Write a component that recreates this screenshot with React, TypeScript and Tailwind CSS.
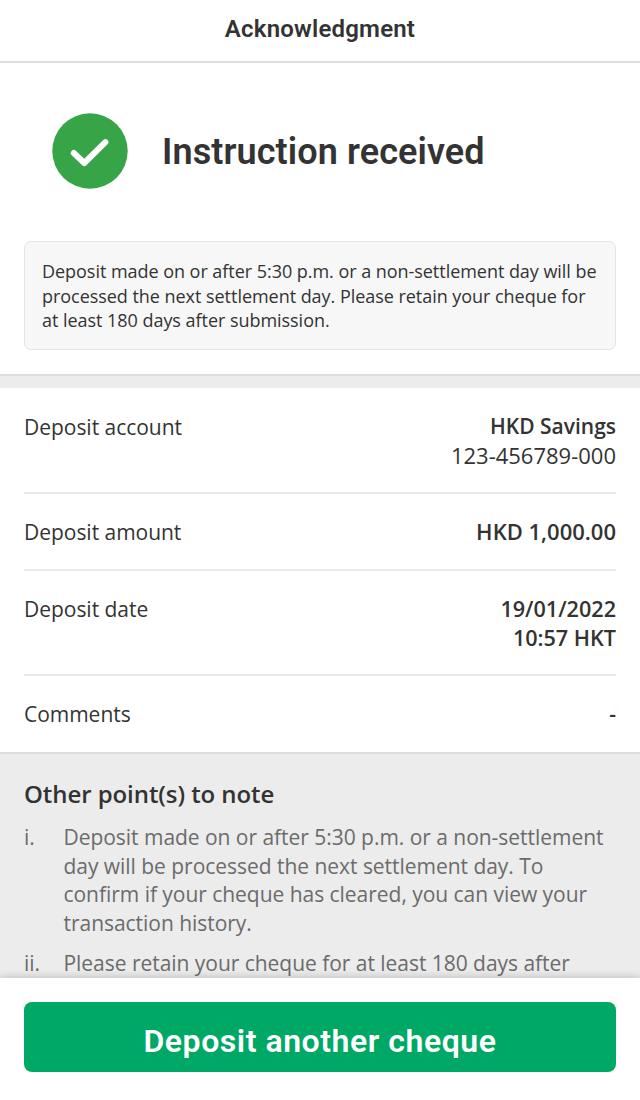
import React from "react";

const details = [
    { label: "Deposit account", row: "h-[106px] pt-[24px]", lines: [{ text: "HKD Savings", style: "font-semibold" }, { text: "123-456789-000", style: "text-[22px] leading-[28px]" }] },
    { label: "Deposit amount", row: "h-[77px] pt-[23px]", lines: [{ text: "HKD 1,000.00", style: "text-[22px] leading-[28px] font-semibold" }] },
    { label: "Deposit date", row: "h-[105px] pt-[23px]", lines: [{ text: "19/01/2022", style: "text-[21.6px] font-semibold" }, { text: "10:57 HKT", style: "text-[21.6px] font-semibold" }] },
    { label: "Comments", row: "h-[76px] pt-[23px]", lines: [{ text: "-", style: "pt-px font-semibold" }] },
];

const notes = [
    { marker: "i.", lines: ["Deposit made on or after 5:30 p.m. or a non-settlement", "day will be processed the next settlement day. To", "confirm if your cheque has cleared, you can view your", "transaction history."] },
    { marker: "ii.", lines: ["Please retain your cheque for at least 180 days after"] },
];

const notice = [
    "Deposit made on or after 5:30 p.m. or a non-settlement day will be",
    "processed the next settlement day. Please retain your cheque for",
    "at least 180 days after submission.",
];

export default function App() {
    return (
        <div className="flex h-[1100px] w-[640px] flex-col overflow-hidden bg-white font-['Open_Sans',sans-serif] text-[#333333]">
            <header className="flex h-[63px] shrink-0 justify-center border-b-2 border-[#dedede] pt-[14px]">
                <h1 className="font-['Roboto',sans-serif] text-[24px] leading-[30px] font-semibold tracking-[0.2px] whitespace-nowrap">Acknowledgment</h1>
            </header>

            <main className="flex min-h-0 flex-1 flex-col overflow-hidden">
                <section className="flex h-[178px] shrink-0 pt-[50px] pl-[52px]">
                    <svg className="h-[76px] w-[76px] shrink-0" viewBox="0 0 76 76" fill="none">
                        <circle cx="38" cy="38" r="37.7" fill="#37a447" />
                        <path d="M21.8 40 32.3 50 53.4 29.2" stroke="white" strokeWidth="6" strokeLinecap="round" strokeLinejoin="round" />
                    </svg>
                    <h2 className="mt-[17px] ml-[34px] font-['Roboto',sans-serif] text-[36px] leading-[44px] font-semibold tracking-[0.1px] whitespace-nowrap">Instruction received</h2>
                </section>

                <section className="h-[133px] shrink-0 px-6">
                    <div className="h-[109px] rounded-[7px] border-[1.5px] border-[#e3e3e3] bg-[#f7f7f7] px-[17px] pt-[17px] text-[18px] leading-[24.5px] tracking-[-0.04px]">
                        {notice.map((line) => (
                            <p key={line} className="whitespace-nowrap">{line}</p>
                        ))}
                    </div>
                </section>

                <div className="h-[14px] shrink-0 border-t-2 border-[#dddddd] bg-[#ececec]" />

                <dl className="shrink-0 px-6">
                    {details.map((item) => (
                        <div key={item.label} className={`flex justify-between border-b-2 border-[#e9e9e9] text-[21px] leading-[29px] last:border-b-0 ${item.row}`}>
                            <dt className="pt-px tracking-[-0.03px]">{item.label}</dt>
                            <dd className="text-right">
                                {item.lines.map((line) => (
                                    <p key={line.text} className={line.style}>{line.text}</p>
                                ))}
                            </dd>
                        </div>
                    ))}
                </dl>

                <section className="min-h-0 flex-1 overflow-hidden border-t-2 border-[#dddddd] bg-[#ececec] px-6 pt-[23px]">
                    <h3 className="text-[24px] leading-[34px] font-semibold tracking-[-0.07px]">Other point(s) to note</h3>
                    <ol className="mt-[12px] text-[21px] leading-[28.7px] tracking-[-0.035px] text-[#6b6b6b]">
                        {notes.map((note) => (
                            <li key={note.marker} className="mb-[11px] flex">
                                <span className="w-[39.5px] shrink-0">{note.marker}</span>
                                <div>
                                    {note.lines.map((line) => (
                                        <p key={line} className="whitespace-nowrap">{line}</p>
                                    ))}
                                </div>
                            </li>
                        ))}
                    </ol>
                </section>
            </main>

            <footer className="z-10 h-[122px] shrink-0 bg-white px-6 pt-6 shadow-[0_-1px_8px_rgba(0,0,0,0.2)]">
                <button className="h-[70px] w-full rounded-lg bg-[#00a865] pt-[7px] font-['Roboto',sans-serif] text-[32px] font-semibold tracking-[0.55px] text-white">
                    Deposit another cheque
                </button>
            </footer>
        </div>
    );
}
